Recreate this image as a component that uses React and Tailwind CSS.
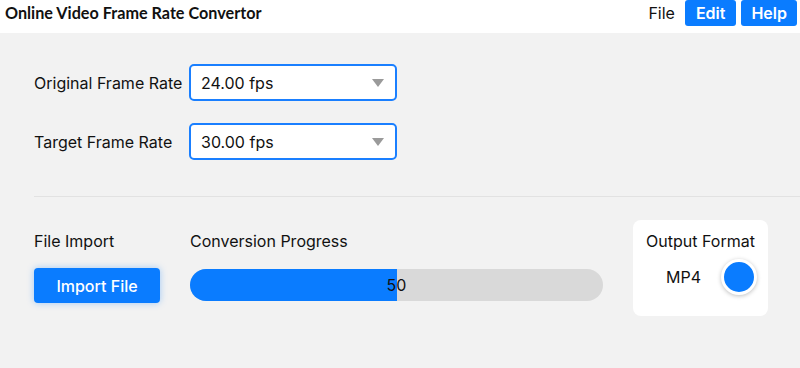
import React from 'react';

const Select = ({ value }) => (
    <div className="w-[208px] h-[37px] bg-white border-2 border-[#1a7fff] rounded-[5px] flex items-center justify-between pl-[10px] pr-[11px]">
        <span className="text-[16px] text-[#111]">{value}</span>
        <svg width="12" height="8" viewBox="0 0 12 8"><path d="M0 0h12L6 8z" fill="#9a9a9a" /></svg>
    </div>
);

const App = () => {
    const pct = 50;
    return (
        <div className="w-[800px] h-[368px] bg-[#f2f2f2] overflow-hidden" style={{ fontFamily: 'Inter, "Noto Sans", sans-serif' }}>
            {/* Header */}
            <div className="h-[33px] bg-white flex items-start justify-between pl-[5px] pr-[3px]">
                <div className="h-[26px] flex items-center text-[16.2px] font-bold text-[#111]" style={{ fontFamily: 'Lato, sans-serif' }}>
                    Online Video Frame Rate Convertor
                </div>
                <div className="flex items-center h-[26px] gap-[5px]">
                    <span className="text-[16px] text-[#111] mr-[5px]">File</span>
                    <button className="h-[26px] px-[11px] bg-[#0a7cff] text-white font-semibold text-[16px] rounded-[3px]">Edit</button>
                    <button className="h-[26px] px-[10px] bg-[#0a7cff] text-white font-semibold text-[16px] rounded-[3px]">Help</button>
                </div>
            </div>

            {/* Frame rates */}
            <div className="pl-[34px] pt-[31px]">
                <div className="flex items-center">
                    <label className="w-[155px] text-[16px] text-[#111]">Original Frame Rate</label>
                    <Select value="24.00 fps" />
                </div>
                <div className="flex items-center mt-[22px]">
                    <label className="w-[155px] text-[16px] text-[#111]">Target Frame Rate</label>
                    <Select value="30.00 fps" />
                </div>
                <div className="h-px bg-[#e2e2e2] mt-[36px]" />

                {/* Bottom row */}
                <div className="flex items-start mt-[23px]">
                    <div className="w-[156px] pt-[11px]">
                        <p className="text-[16px] leading-[20px] text-[#111]">File Import</p>
                        <button className="mt-[17px] w-[126px] h-[35px] bg-[#0a7cff] text-white text-[16px] font-medium rounded-[4px] shadow-[0_0_7px_rgba(10,124,255,0.35)]">
                            Import File
                        </button>
                    </div>
                    <div className="w-[413px] pt-[11px]">
                        <p className="text-[16px] leading-[20px] text-[#111]">Conversion Progress</p>
                        <div className="relative mt-[18px] h-[32px] rounded-full bg-[#d9d9d9] overflow-hidden">
                            <div className="h-full bg-[#0a7cff]" style={{ width: `${pct}%` }} />
                            <span className="absolute inset-0 flex items-center justify-center text-[16px] text-[#111]">{pct}</span>
                        </div>
                    </div>
                    <div className="ml-[30px] w-[135px] h-[96px] bg-white rounded-[8px] flex flex-col pt-[11px]">
                        <p className="text-[16px] leading-[20px] text-[#111] text-center">Output Format</p>
                        <div className="flex items-center mt-[8px] gap-[20px] pl-[33px]">
                            <span className="text-[16px] text-[#111]">MP4</span>
                            <div className="w-[36px] h-[36px] rounded-full bg-[#0a7cff] border-[3px] border-white shadow-[0_1px_4px_rgba(0,0,0,0.25)]" />
                        </div>
                    </div>
                </div>
            </div>
        </div>
    );
};

export default App;
